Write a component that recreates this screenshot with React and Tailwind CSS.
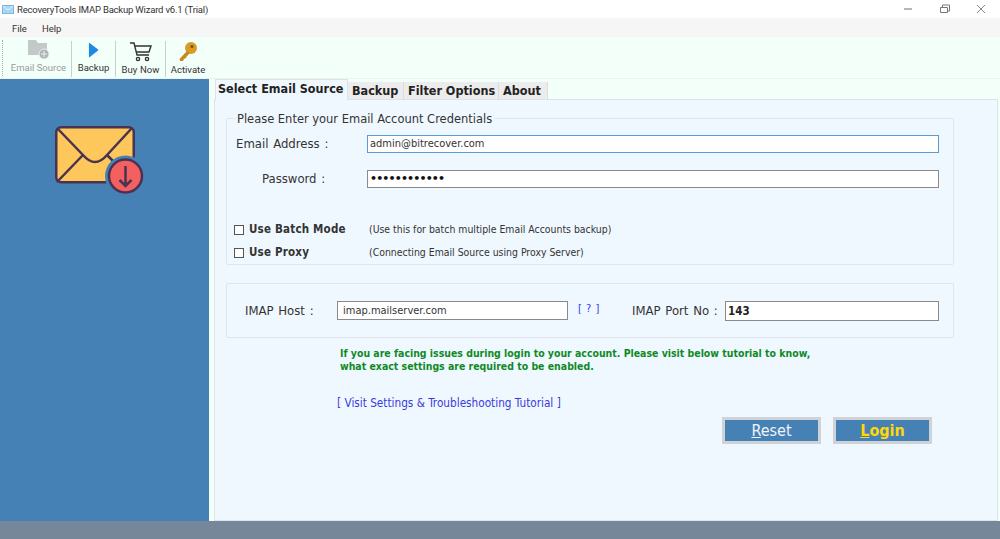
import React from "react";

const dv = "font-['DejaVu_Sans_Condensed','DejaVu_Sans',sans-serif] [font-stretch:condensed]";
const ui = "font-['Roboto','Noto_Sans',sans-serif]";

function Envelope() {
  return (
    <svg width="92" height="72" viewBox="0 0 92 72" className="block">
      <rect x="1.25" y="1.25" width="77.5" height="55" rx="5" fill="#fdc75b" stroke="#4a3352" strokeWidth="2.5" />
      <path d="M2 2 L28 29 Q40 43 52 29 L77 2" fill="none" stroke="#4a3352" strokeWidth="2.5" />
      <path d="M2 56 L28 29 M52 29 L60 37" fill="none" stroke="#4a3352" strokeWidth="2.5" />
      <circle cx="70.5" cy="50" r="20.5" fill="#4581b5" />
      <circle cx="70.5" cy="50" r="16.5" fill="#f4605f" stroke="#4a3352" strokeWidth="2.5" />
      <path d="M70.5 40 V60 M64.5 54 L70.5 60 L76.5 54" fill="none" stroke="#4a3352" strokeWidth="2.5" />
    </svg>
  );
}

function Tool({ label, children, muted, pt, track }) {
  return (
    <div className={`flex flex-col items-center ${pt}`}>
      <div className="h-[21px] flex items-center justify-center">{children}</div>
      <span className={`${ui} text-[9.5px] leading-[14px] mt-[1px] whitespace-nowrap ${track} ${muted ? "text-[#9a9a9a]" : "text-[#333]"}`}>{label}</span>
    </div>
  );
}

const Sep = () => <div className="w-px h-[36px] bg-[#c9cfcb] mt-[4px]" />;

function Tab({ children, active, w }) {
  return (
    <div className={`${dv} font-bold text-[#222] text-[12.5px] leading-[16px] whitespace-nowrap ${w} ${active ? "bg-[#f0f8ff] border border-b-0 border-[#dde3e6] h-[21px] pt-[1px] pl-[2px] -mb-px relative" : "bg-[#ececec] h-[17px] pl-[4px] pt-[1px] border-r border-[#dcdcdc]"}`}>
      {children}
    </div>
  );
}

function Check({ label, note }) {
  return (
    <div className="flex items-center h-[23px]">
      <span className="w-[10px] h-[10px] border border-[#555] bg-white -ml-[2px] shrink-0" />
      <span className={`${dv} font-bold text-[11.5px] tracking-[0.2px] text-[#333] ml-[5px] w-[120px] whitespace-nowrap`}>{label}</span>
      <span className={`${dv} text-[10.4px] text-[#333] whitespace-nowrap`}>{note}</span>
    </div>
  );
}

export default function App() {
  return (
    <div className="w-[1000px] h-[539px] overflow-hidden flex flex-col bg-white relative">
      {/* title bar */}
      <div className="h-[18px] flex items-center shrink-0 bg-white">
        <svg width="12" height="9" viewBox="0 0 12 9" className="ml-[2px] mr-[3px]">
          <rect x="0.5" y="0.5" width="11" height="8" fill="#a9d6f2" stroke="#7ab8e0" />
          <path d="M1 1 L6 5 L11 1" fill="none" stroke="#e8f5ff" />
        </svg>
        <span className={`${ui} text-[9.5px] tracking-[-0.2px] leading-[14px] mt-[2px] text-[#333] whitespace-nowrap`}>RecoveryTools IMAP Backup Wizard v6.1 (Trial)</span>
        <div className="ml-auto flex items-center">
          <svg width="100" height="18" viewBox="0 0 100 18" className="block">
            <path d="M4 9 H12" stroke="#888" strokeWidth="1.2" />
            <path d="M40.5 7.5 H47.5 V12.5 H40.5 Z M42.5 7 V5 H49.5 V11 H48" fill="none" stroke="#777" strokeWidth="1" />
            <path d="M77 5 L85 13 M85 5 L77 13" stroke="#888" strokeWidth="1" />
          </svg>
        </div>
      </div>
      {/* menu */}
      <div className={`h-[19px] flex items-center shrink-0 bg-[#f6f6f6] ${ui} text-[9.5px] leading-[14px] pt-[2px] text-[#333]`}>
        <span className="ml-[12px]">File</span>
        <span className="ml-[15px]">Help</span>
      </div>
      {/* toolbar */}
      <div className="h-[42px] shrink-0 bg-[#f3fff9] flex items-start border-b border-[#eef2ef]">
        <div className="w-[3px] h-[36px] mt-[3px] ml-[2px] border-l border-dotted border-[#aaa]" />
        <div className="w-[65px] ml-[1px]">
          <Tool label="Email Source" muted pt="pt-[2px]">
            <svg width="24" height="21" viewBox="0 0 24 21">
              <path d="M1 1 H9 L11 4 H20 V16 H1 Z" fill="#c4c8c8" />
              <circle cx="17" cy="15" r="5" fill="#b0b4b4" stroke="#eee" />
              <path d="M17 12 V18 M14 15 H20" stroke="#eee" />
            </svg>
          </Tool>
        </div>
        <Sep />
        <div className="w-[43px]">
          <Tool label="Backup" pt="pt-[2px]">
            <svg width="11" height="16" viewBox="0 0 12 17"><path d="M1 1 Q1 0 2 1 L11 8 Q11.5 8.5 11 9 L2 16 Q1 17 1 16 Z" fill="#1e88e5" /></svg>
          </Tool>
        </div>
        <Sep />
        <div className="w-[49px]">
          <Tool label="Buy Now" pt="pt-[4px]" track="tracking-[0.1px]">
            <svg width="22" height="20" viewBox="0 0 22 20" fill="none" stroke="#333" strokeWidth="1.4">
              <path d="M0 1 H4 L7 13 H19" />
              <path d="M5 4 H21 L19 10 H6.5" />
              <circle cx="8" cy="17" r="1.6" />
              <circle cx="17" cy="17" r="1.6" />
            </svg>
          </Tool>
        </div>
        <Sep />
        <div className="w-[44px]">
          <Tool label="Activate" pt="pt-[4px]">
            <svg width="20" height="21" viewBox="0 0 20 21">
              <circle cx="13" cy="7" r="6" fill="#d89b28" />
              <circle cx="14" cy="5.5" r="1.6" fill="#6f5520" />
              <path d="M9 10 L1.5 18 L2 20 L5 20 L6 18 L8 17 L9 15 L12 12 Z" fill="#c58a20" />
            </svg>
          </Tool>
        </div>
      </div>
      {/* body */}
      <div className="flex flex-1 min-h-0">
        <aside className="w-[209px] shrink-0 bg-[#4581b5] pl-[55px] pt-[47px]">
          <Envelope />
        </aside>
        <main className="flex-1 min-w-0 pl-[5px] pr-[2px] bg-[#f3fff9] flex flex-col">
          <div className="h-[20px] flex items-end shrink-0 pl-[1px]">
            <Tab active w="w-[133px]">Select Email Source</Tab>
            <Tab w="w-[56px]">Backup</Tab>
            <Tab w="w-[95px]">Filter Options</Tab>
            <Tab w="w-[49px]">About</Tab>
          </div>
          <div className="flex-1 bg-[#f0f8ff] border border-[#dde3e6] pl-[11px] pt-[11px]">
            {/* credentials fieldset */}
            <fieldset className="w-[728px] h-[154px] border border-[#dfe5ea] rounded-[2px] m-0 p-0 pl-[9px]">
              <legend className={`${dv} text-[12.75px] leading-[15px] text-[#333] px-[2px] ml-[-1px]`}>Please Enter your Email Account Credentials</legend>
              <div className="flex items-center h-[20px] mt-[8px]">
                <span className={`${dv} text-[13px] [word-spacing:1px] text-[#333] w-[131px] whitespace-nowrap`}>Email Address :</span>
                <div className={`w-[572px] h-[18px] bg-white border border-[#5a9bd5] ${dv} text-[11px] leading-[16px] text-[#333] pl-[2px]`}>admin@bitrecover.com</div>
              </div>
              <div className="flex items-center h-[20px] mt-[15px]">
                <span className={`${dv} text-[13px] [word-spacing:1px] text-[#333] w-[131px] pl-[26px] whitespace-nowrap`}>Password :</span>
                <div className="w-[572px] h-[18px] bg-white border border-[#8a8a8a] font-['DejaVu_Sans',sans-serif] text-[11px] tracking-[-0.85px] font-bold leading-[16px] text-[#111] pl-[2px]">••••••••••••</div>
              </div>
              <div className="mt-[29px]">
                <Check label="Use Batch Mode" note="(Use this for batch multiple Email Accounts backup)" />
                <Check label="Use Proxy" note="(Connecting Email Source using Proxy Server)" />
              </div>
            </fieldset>
            {/* IMAP box */}
            <div className="w-[728px] h-[55px] border border-[#dfe5ea] rounded-[2px] mt-[18px] flex items-center pl-[18px]">
              <span className={`${dv} text-[13px] [word-spacing:1px] text-[#333] w-[92px] whitespace-nowrap`}>IMAP Host :</span>
              <div className={`w-[231px] h-[19px] bg-white border border-[#8a8a8a] ${dv} text-[11px] leading-[17px] text-[#333] pl-[5px]`}>imap.mailserver.com</div>
              <span className={`${dv} text-[11px] [word-spacing:1px] text-[#3a3ae0] ml-[10px] -mt-[2px] w-[54px] whitespace-nowrap`}>[ ? ]</span>
              <span className={`${dv} text-[13px] [word-spacing:1px] text-[#333] w-[93px] whitespace-nowrap`}>IMAP Port No :</span>
              <div className={`w-[214px] h-[20px] bg-white border border-[#8a8a8a] ${dv} font-bold text-[11.5px] leading-[18px] text-[#222] pl-[2px]`}>143</div>
            </div>
            <p className={`${dv} font-bold text-[10.45px] leading-[13px] text-[#0f8a1f] mt-[9px] ml-[114px] whitespace-nowrap`}>
              If you are facing issues during login to your account. Please visit below tutorial to know,<br />
              what exact settings are required to be enabled.
            </p>
            <div className={`${dv} text-[11.7px] leading-[14px] text-[#3a3ae0] mt-[23px] ml-[111px] whitespace-nowrap`}>[ Visit Settings &amp; Troubleshooting Tutorial ]</div>
            <div className="flex mt-[7px] ml-[496px] gap-[12px]">
              <button className={`w-[99px] h-[27px] bg-[#4581b5] border-[3px] border-[#cfd2d6] ${dv} text-[16px] leading-[21px] text-[#f0f4f8]`}><u>R</u>eset</button>
              <button className={`w-[99px] h-[27px] bg-[#4581b5] border-[3px] border-[#cfd2d6] ${dv} font-bold text-[16px] leading-[21px] text-[#ffd60a]`}><u>L</u>ogin</button>
            </div>
          </div>
        </main>
      </div>
      {/* footer */}
      <div className="h-[18px] shrink-0 bg-[#76879a]" />
    </div>
  );
}
